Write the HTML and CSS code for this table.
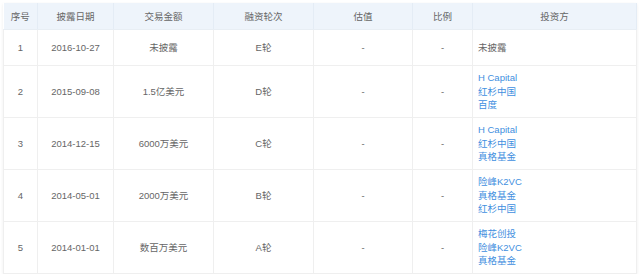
FILE: index.html
```html
<!DOCTYPE html>
<html lang="zh">
<head>
<meta charset="utf-8">
<link rel="stylesheet" href="styles.css">
</head>
<body>
<div class="wrap">
<table class="fin">
<colgroup>
<col class="c1"><col class="c2"><col class="c3"><col class="c4"><col class="c5"><col class="c6"><col class="c7">
</colgroup>
<thead>
<tr><th>序号</th><th>披露日期</th><th>交易金额</th><th>融资轮次</th><th>估值</th><th>比例</th><th>投资方</th></tr>
</thead>
<tbody>
<tr class="r1"><td>1</td><td>2016-10-27</td><td>未披露</td><td>E轮</td><td>-</td><td>-</td><td class="inv"><span class="plain">未披露</span></td></tr>
<tr><td>2</td><td>2015-09-08</td><td>1.5亿美元</td><td>D轮</td><td>-</td><td>-</td><td class="inv"><a>H Capital</a><a>红杉中国</a><a>百度</a></td></tr>
<tr><td>3</td><td>2014-12-15</td><td>6000万美元</td><td>C轮</td><td>-</td><td>-</td><td class="inv"><a>H Capital</a><a>红杉中国</a><a>真格基金</a></td></tr>
<tr><td>4</td><td>2014-05-01</td><td>2000万美元</td><td>B轮</td><td>-</td><td>-</td><td class="inv"><a>险峰K2VC</a><a>真格基金</a><a>红杉中国</a></td></tr>
<tr><td>5</td><td>2014-01-01</td><td>数百万美元</td><td>A轮</td><td>-</td><td>-</td><td class="inv"><a>梅花创投</a><a>险峰K2VC</a><a>真格基金</a></td></tr>
</tbody>
</table>
</div>
</body>
</html>
```
FILE: styles.css
```css
html, body { margin: 0; padding: 0; background: #fff; }
.wrap { padding: 3px 4px 0 3px; }
.fin {
  border-collapse: collapse;
  table-layout: fixed;
  width: 633px;
  font-family: "Liberation Sans", "Noto Sans CJK SC", sans-serif;
  font-size: 9.5px;
  color: #666;
  box-shadow: 0 1px 3px rgba(0,0,0,0.07);
}
.c1 { width: 34px; }
.c2 { width: 76px; }
.c3 { width: 100px; }
.c4 { width: 100px; }
.c5 { width: 99px; }
.c6 { width: 60px; }
.c7 { width: 164px; }
.fin th {
  background: #eef4fb;
  color: #666;
  font-weight: normal;
  height: 26px;
  padding: 0;
  text-align: center;
  border-right: 1px solid #e4ecf5;
  border-bottom: 1px solid #e8eef4;
}
.fin td {
  height: 51px;
  padding: 0;
  text-align: center;
  border: 1px solid #efefef;
  line-height: 13.5px;
}
.fin tr.r1 td { height: 35px; }
.fin td.inv { text-align: left; padding-left: 5px; }
.inv a { display: block; color: #3f8fe0; }
.plain { color: #666; }
```
